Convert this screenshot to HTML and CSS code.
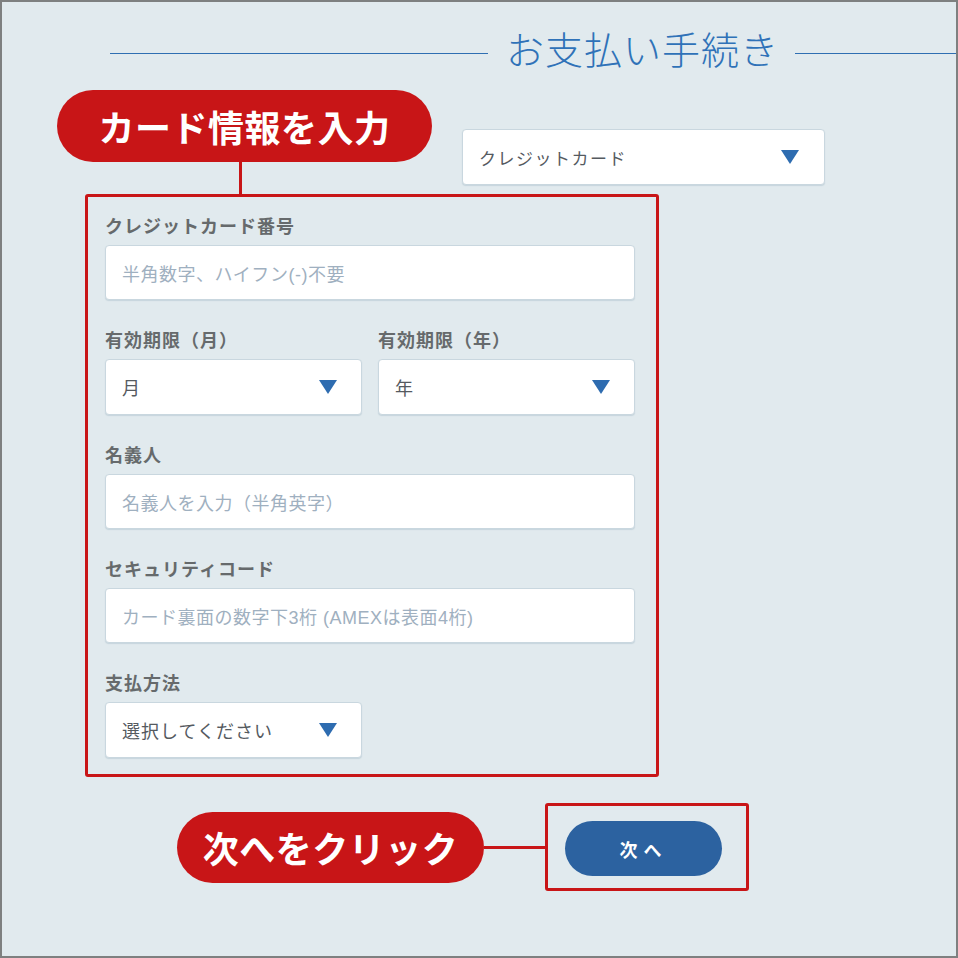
FILE: index.html
```html
<!DOCTYPE html>
<html lang="ja">
<head>
    <meta charset="UTF-8">
    <meta name="viewport" content="width=device-width, initial-scale=1.0">
    <title>お支払い手続き</title>
    <link rel="stylesheet" href="styles.css">
</head>
<body>
    <div class="frame">
        <div class="title-row">
            <span class="title-line"></span>
            <h1>お支払い手続き</h1>
            <span class="title-line title-line-right"></span>
        </div>

        <div class="top-row">
            <div class="callout callout-card">カード情報を入力</div>
            <div class="select select-method">
                <span>クレジットカード</span>
                <span class="arrow"></span>
            </div>
        </div>

        <div class="card-box">
            <div class="field">
                <label>クレジットカード番号</label>
                <div class="input placeholder">半角数字、ハイフン(-)不要</div>
            </div>

            <div class="field field-split">
                <div>
                    <label>有効期限（月）</label>
                    <div class="select">
                        <span>月</span>
                        <span class="arrow"></span>
                    </div>
                </div>
                <div>
                    <label>有効期限（年）</label>
                    <div class="select">
                        <span>年</span>
                        <span class="arrow"></span>
                    </div>
                </div>
            </div>

            <div class="field">
                <label>名義人</label>
                <div class="input placeholder">名義人を入力（半角英字）</div>
            </div>

            <div class="field">
                <label>セキュリティコード</label>
                <div class="input placeholder">カード裏面の数字下3桁 (AMEXは表面4桁)</div>
            </div>

            <div class="field field-last">
                <label>支払方法</label>
                <div class="select select-half">
                    <span>選択してください</span>
                    <span class="arrow"></span>
                </div>
            </div>
        </div>

        <div class="bottom-row">
            <div class="callout callout-next">次へをクリック</div>
            <span class="connector"></span>
            <div class="next-box">
                <button class="next-button">次へ</button>
            </div>
        </div>
    </div>
</body>
</html>
```

FILE: styles.css
```css
body {
    margin: 0;
    font-family: "Noto Sans CJK JP", "Noto Sans", sans-serif;
}
.frame {
    width: 958px;
    height: 958px;
    box-sizing: border-box;
    border: 2px solid #7e8080;
    background-color: #e1eaee;
    overflow: hidden;
}
.title-row {
    display: flex;
    align-items: center;
    height: 44px;
    margin-top: 24px;
    padding-left: 108px;
}
.title-line {
    flex: 1;
    height: 1px;
    background-color: #2f6fb2;
    margin-top: 11px;
}
.title-line-right {
    flex: none;
    width: 161px;
}
h1 {
    margin: 0 16px 0 18px;
    font-size: 38px;
    font-weight: 300;
    line-height: 44px;
    letter-spacing: 1px;
    color: #2f72b8;
}
.top-row {
    display: flex;
    align-items: flex-start;
    margin-top: 20px;
    padding-left: 55px;
}
.callout {
    position: relative;
    display: flex;
    align-items: center;
    justify-content: center;
    background-color: #c81517;
    color: #fff;
    font-weight: 700;
    font-size: 36px;
    letter-spacing: 0.5px;
}
.callout-card {
    width: 375px;
    height: 72px;
    border-radius: 36px;
}
.callout-card::after {
    content: "";
    position: absolute;
    left: 182px;
    top: 72px;
    width: 3px;
    height: 32px;
    background-color: #c81517;
}
.select,
.input {
    box-sizing: border-box;
    height: 56px;
    display: flex;
    align-items: center;
    padding: 0 16px;
    background-color: #fff;
    border: 1px solid #c9d7df;
    border-radius: 4px;
    box-shadow: 0 1px 1px rgba(120, 150, 170, 0.25);
    font-size: 18px;
    letter-spacing: 1px;
    color: #555a5f;
}
.select {
    justify-content: space-between;
    padding-right: 24px;
}
.input {
    height: 55px;
}
.select-method {
    width: 363px;
    margin-left: 30px;
    margin-top: 39px;
    font-size: 17px;
    letter-spacing: 1.5px;
    padding-right: 25px;
}
.arrow {
    width: 0;
    height: 0;
    border-left: 9px solid transparent;
    border-right: 9px solid transparent;
    border-top: 14px solid #2e6cb0;
}
.placeholder {
    font-family: "Liberation Sans", "Noto Sans CJK JP", sans-serif;
    letter-spacing: 0.5px;
    color: #9fb0c0;
}
.card-box {
    box-sizing: border-box;
    width: 574px;
    height: 583px;
    margin: 9px 0 0 83px;
    padding: 16px 21px 0 17px;
    border: 3px solid #c81517;
    border-radius: 3px;
}
.field {
    margin-bottom: 27px;
}
.field-last {
    margin-bottom: 0;
}
.field label {
    display: block;
    height: 24px;
    line-height: 24px;
    margin-bottom: 8px;
    font-size: 18px;
    font-weight: 700;
    letter-spacing: 1px;
    color: #666a6c;
}
.field-split {
    display: grid;
    grid-template-columns: 1fr 1fr;
    gap: 16px;
}
.select-half {
    width: 257px;
}
.bottom-row {
    display: flex;
    align-items: center;
    margin-top: 26px;
    padding-left: 175px;
}
.callout-next {
    width: 307px;
    height: 71px;
    border-radius: 36px;
}
.connector {
    width: 61px;
    height: 3px;
    background-color: #c81517;
}
.next-box {
    box-sizing: border-box;
    width: 204px;
    height: 88px;
    padding: 15px 0 0 17px;
    border: 3px solid #c81517;
    border-radius: 3px;
}
.next-button {
    width: 157px;
    height: 55px;
    border: none;
    border-radius: 28px;
    background-color: #2c62a0;
    color: #fff;
    font-family: inherit;
    font-size: 18px;
    font-weight: 700;
    letter-spacing: 6px;
    padding-left: 6px;
}
```
